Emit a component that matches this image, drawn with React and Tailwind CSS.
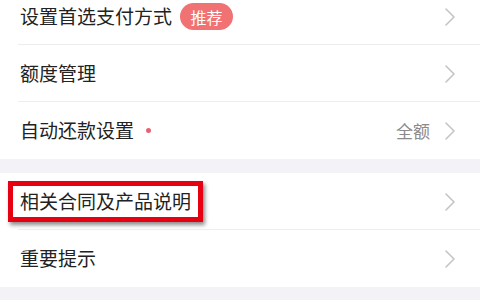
const Chevron = () => (
  <svg width="12" height="20" viewBox="0 0 12 20" className="shrink-0" fill="none">
    <path d="M2 2 L10 10 L2 18" stroke="#c4c4c8" strokeWidth="1.6" strokeLinecap="round" strokeLinejoin="round" />
  </svg>
);

const Row = ({ children, extra, divider = true }) => (
  <div className="relative flex h-[57px] items-center bg-white pl-[20px] pr-[24px]">
    <div className="flex flex-1 items-center">{children}</div>
    {extra && <span className="mr-[14px] text-[17px] text-[#8a8a8a]">{extra}</span>}
    <Chevron />
    {divider && <div className="absolute bottom-0 left-[18px] right-0 h-px bg-[#ededf0]" />}
  </div>
);

export default function App() {
  return (
    <div
      className="h-[300px] w-[480px] overflow-hidden bg-[#f3f3f7] text-[#222]"
      style={{ fontFamily: '"Noto Sans CJK SC", "Noto Sans", sans-serif' }}
    >
      <div className="mt-[-12px]">
        <Row>
          <span className="text-[19px]">设置首选支付方式</span>
          <span className="ml-[8px] flex h-[27px] w-[53px] items-center justify-center rounded-full bg-[#f07272] text-[16px] text-white">
            推荐
          </span>
        </Row>
        <Row>
          <span className="text-[19px]">额度管理</span>
        </Row>
        <Row extra="全额" divider={false}>
          <span className="text-[19px]">自动还款设置</span>
          <span className="ml-[12px] h-[5px] w-[5px] rounded-full bg-[#e46375]" />
        </Row>
      </div>
      <div className="mt-[14px]">
        <Row>
          <span className="-ml-[12px] border-[5px] border-[#e60012] px-[7px] py-[1px] text-[19px] shadow-[2px_3px_4px_rgba(0,0,0,0.45)]">
            相关合同及产品说明
          </span>
        </Row>
        <Row divider={false}>
          <span className="text-[19px]">重要提示</span>
        </Row>
      </div>
    </div>
  );
}
